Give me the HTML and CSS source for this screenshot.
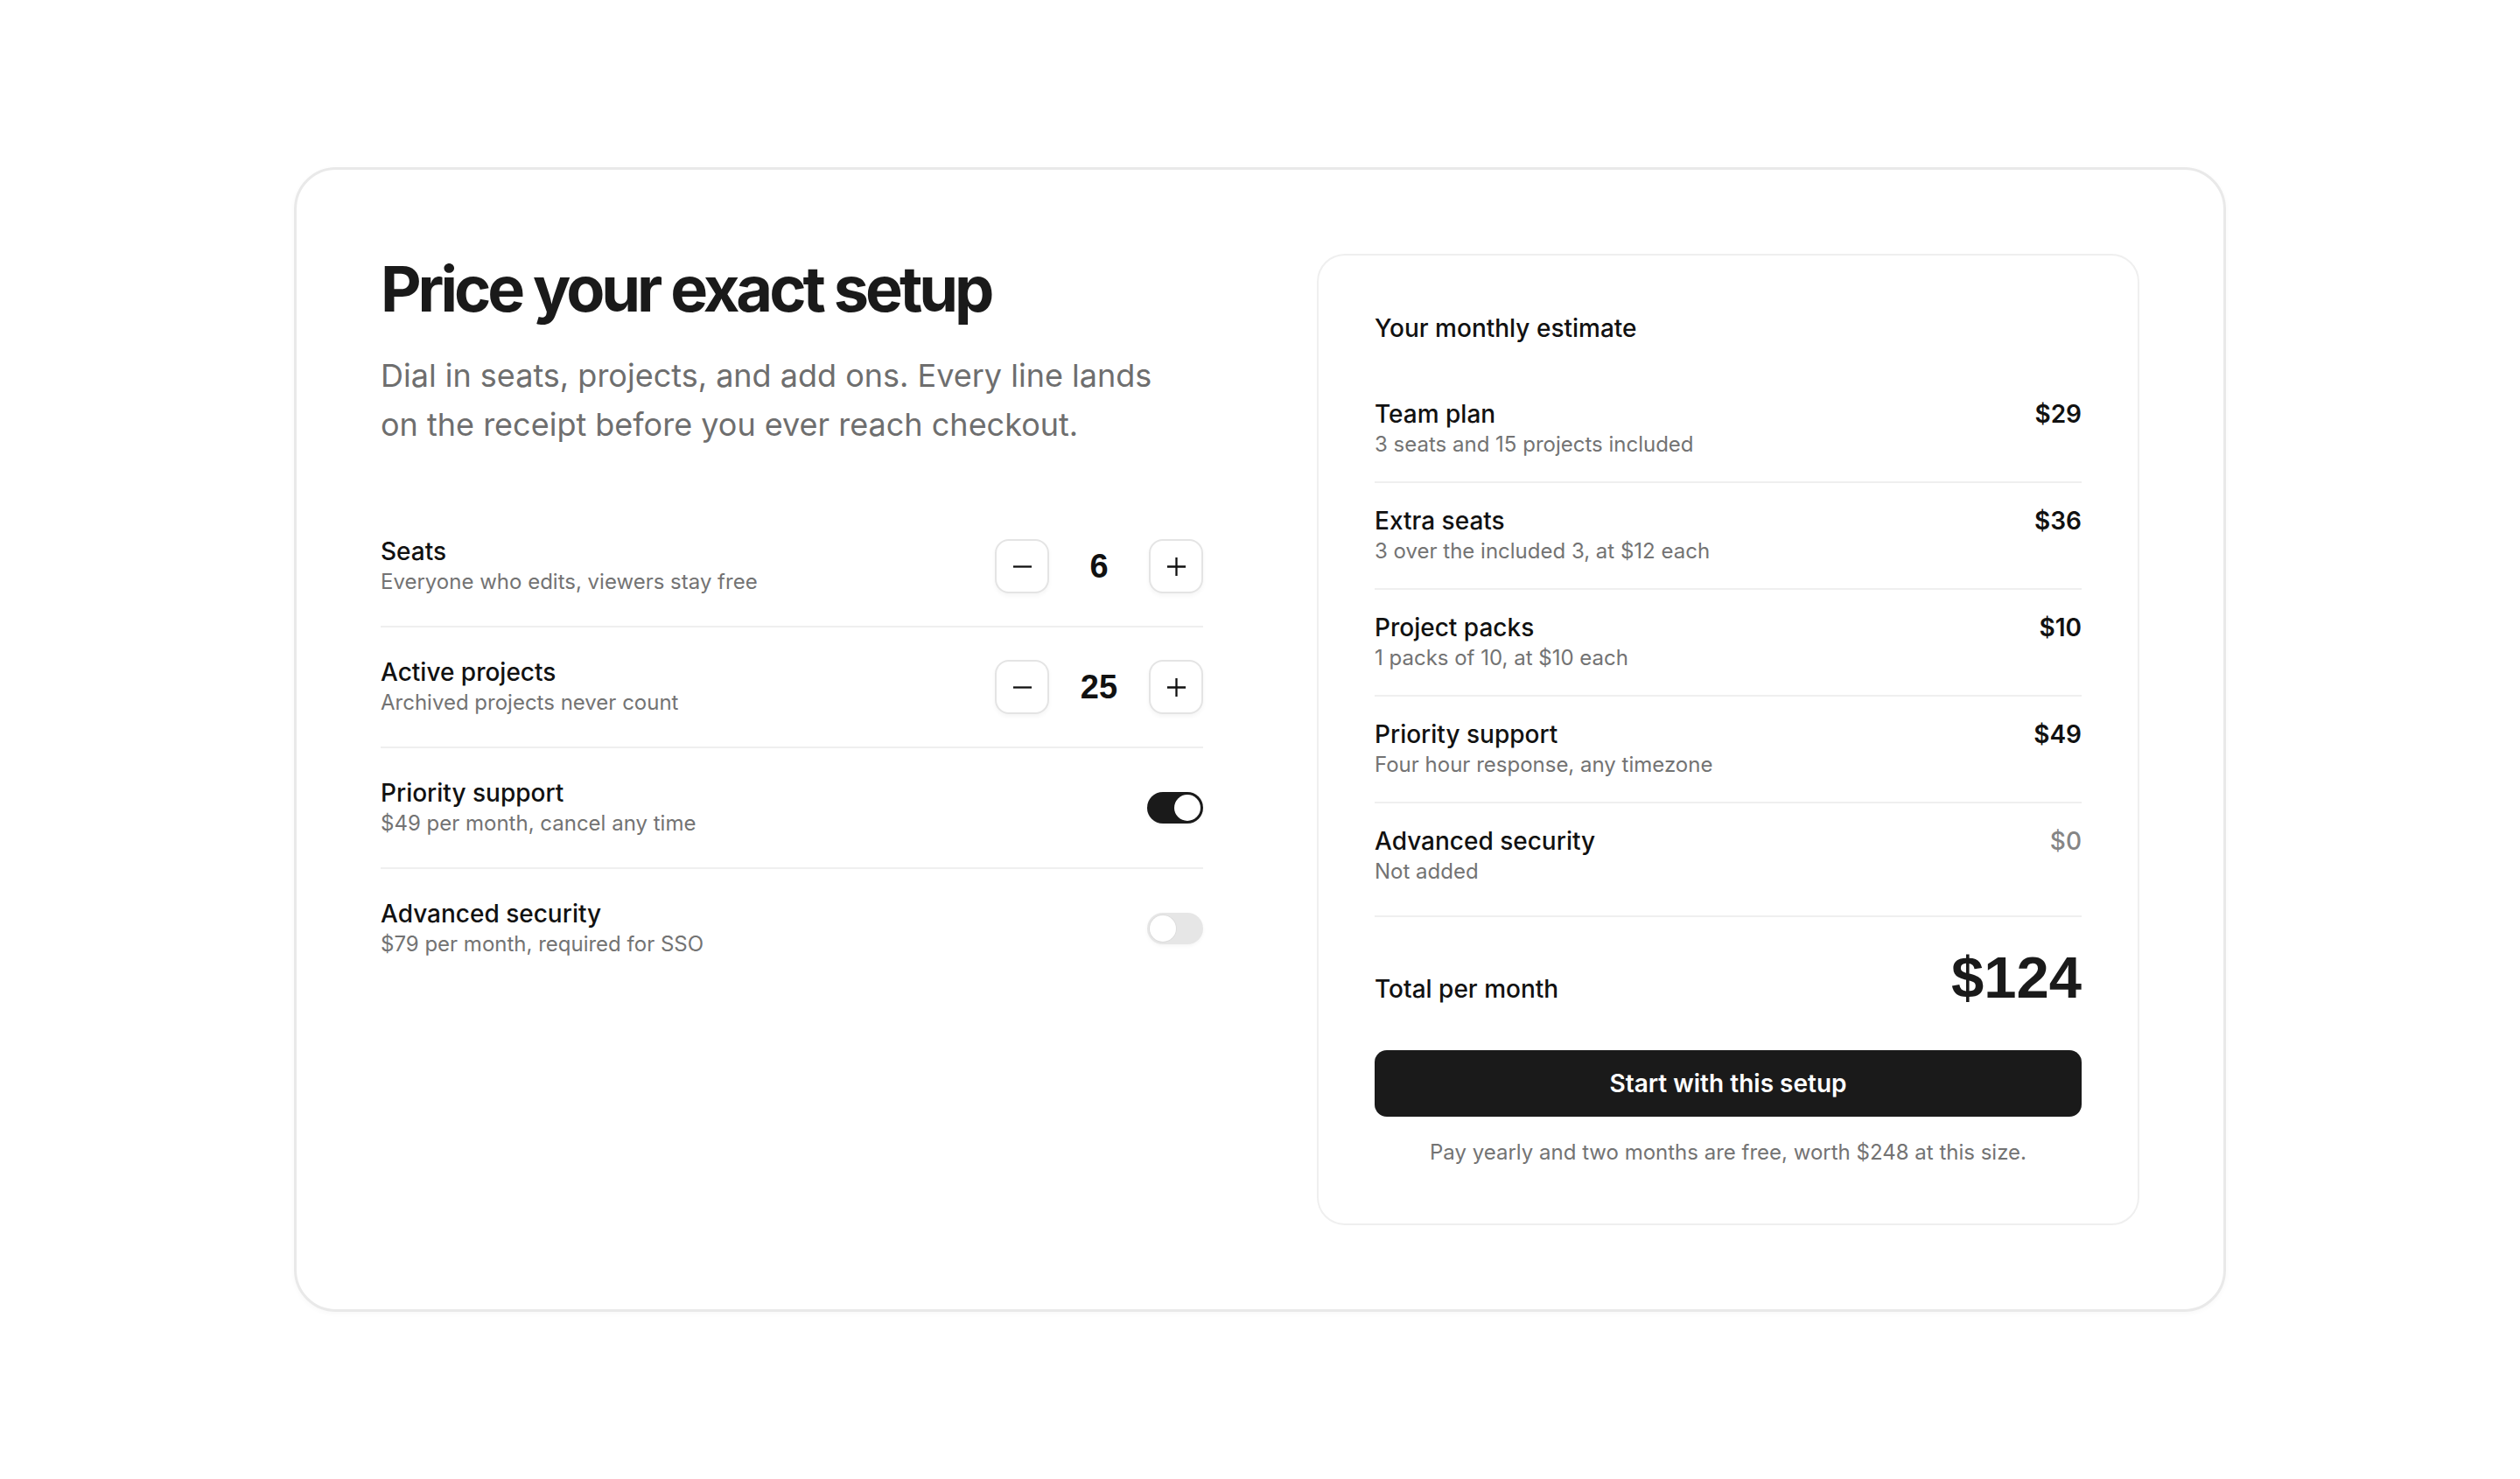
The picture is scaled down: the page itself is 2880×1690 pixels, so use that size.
FILE: index.html
```html
<!DOCTYPE html>
<html lang="en">
<head>
<meta charset="utf-8">
<title>Price your exact setup</title>
<link rel="stylesheet" href="styles.css">
</head>
<body>
<main class="card">
  <section class="config">
    <h1 class="title">Price your exact setup</h1>
    <p class="lede">Dial in seats, projects, and add ons. Every line lands on the receipt before you ever reach checkout.</p>
    <ul class="options">
      <li class="option">
        <div class="option-text">
          <span class="option-label">Seats</span>
          <span class="option-desc">Everyone who edits, viewers stay free</span>
        </div>
        <div class="stepper">
          <button class="step-btn" aria-label="Remove seat"><svg viewBox="0 0 24 24" class="step-icon"><path d="M1 12h22"/></svg></button>
          <span class="step-value">6</span>
          <button class="step-btn" aria-label="Add seat"><svg viewBox="0 0 24 24" class="step-icon"><path d="M1 12h22M12 1v22"/></svg></button>
        </div>
      </li>
      <li class="option">
        <div class="option-text">
          <span class="option-label">Active projects</span>
          <span class="option-desc">Archived projects never count</span>
        </div>
        <div class="stepper">
          <button class="step-btn" aria-label="Remove project"><svg viewBox="0 0 24 24" class="step-icon"><path d="M1 12h22"/></svg></button>
          <span class="step-value">25</span>
          <button class="step-btn" aria-label="Add project"><svg viewBox="0 0 24 24" class="step-icon"><path d="M1 12h22M12 1v22"/></svg></button>
        </div>
      </li>
      <li class="option">
        <div class="option-text">
          <span class="option-label">Priority support</span>
          <span class="option-desc">$49 per month, cancel any time</span>
        </div>
        <span class="toggle toggle-on" role="switch" aria-checked="true"><span class="knob"></span></span>
      </li>
      <li class="option">
        <div class="option-text">
          <span class="option-label">Advanced security</span>
          <span class="option-desc">$79 per month, required for SSO</span>
        </div>
        <span class="toggle" role="switch" aria-checked="false"><span class="knob"></span></span>
      </li>
    </ul>
  </section>

  <aside class="receipt">
    <h2 class="receipt-title">Your monthly estimate</h2>
    <ul class="lines">
      <li class="line">
        <div class="line-text">
          <span class="line-label">Team plan</span>
          <span class="line-desc">3 seats and 15 projects included</span>
        </div>
        <span class="line-amount">$29</span>
      </li>
      <li class="line">
        <div class="line-text">
          <span class="line-label">Extra seats</span>
          <span class="line-desc">3 over the included 3, at $12 each</span>
        </div>
        <span class="line-amount">$36</span>
      </li>
      <li class="line">
        <div class="line-text">
          <span class="line-label">Project packs</span>
          <span class="line-desc">1 packs of 10, at $10 each</span>
        </div>
        <span class="line-amount">$10</span>
      </li>
      <li class="line">
        <div class="line-text">
          <span class="line-label">Priority support</span>
          <span class="line-desc">Four hour response, any timezone</span>
        </div>
        <span class="line-amount">$49</span>
      </li>
      <li class="line">
        <div class="line-text">
          <span class="line-label">Advanced security</span>
          <span class="line-desc">Not added</span>
        </div>
        <span class="line-amount line-amount-muted">$0</span>
      </li>
    </ul>
    <div class="total">
      <span class="total-label">Total per month</span>
      <span class="total-amount">$124</span>
    </div>
    <button class="cta">Start with this setup</button>
    <p class="note">Pay yearly and two months are free, worth $248 at this size.</p>
  </aside>
</main>
</body>
</html>
```

FILE: styles.css
```css
* {
  box-sizing: border-box;
}

html, body {
  margin: 0;
  padding: 0;
}

body {
  min-height: 100vh;
  display: flex;
  align-items: center;
  justify-content: center;
  background: #ffffff;
  font-family: Inter, "Noto Sans", "Liberation Sans", sans-serif;
  color: #111111;
}

.card {
  width: 2208px;
  display: grid;
  grid-template-columns: 1fr 1fr;
  column-gap: 130px;
  align-items: start;
  padding: 96px;
  border: 3px solid #e9e9e9;
  border-radius: 48px;
  background: #ffffff;
  box-shadow: 0 2px 6px rgba(0, 0, 0, 0.03);
}

/* Left column */
.config {
  display: flex;
  flex-direction: column;
}

.title {
  margin: 0;
  font-size: 72px;
  line-height: 79px;
  font-weight: 700;
  letter-spacing: -0.056em;
  color: #1a1a1a;
}

.lede {
  margin: 32px 0 0;
  max-width: 900px;
  font-size: 36px;
  line-height: 56px;
  font-weight: 400;
  color: #6e6e6e;
}

.options {
  list-style: none;
  margin: 66px 0 0;
  padding: 0;
}

.option {
  display: flex;
  align-items: center;
  justify-content: space-between;
  padding: 33px 0;
  border-bottom: 2px solid #efefef;
}

.option:last-child {
  border-bottom: none;
}

.option-text {
  display: flex;
  flex-direction: column;
}

.option-label {
  font-size: 28px;
  line-height: 36px;
  font-weight: 500;
  color: #111111;
}

.option-desc {
  font-size: 24px;
  line-height: 34px;
  color: #737373;
}

.stepper {
  display: flex;
  align-items: center;
  gap: 14px;
}

.step-btn {
  width: 62px;
  height: 62px;
  padding: 0;
  display: flex;
  align-items: center;
  justify-content: center;
  background: #ffffff;
  border: 2px solid #e4e4e4;
  border-radius: 16px;
  box-shadow: 0 3px 5px rgba(0, 0, 0, 0.04);
  cursor: pointer;
}

.step-icon {
  width: 23px;
  height: 23px;
  fill: none;
  stroke: #111111;
  stroke-width: 2.4;
}

.step-value {
  min-width: 86px;
  text-align: center;
  font-family: "Liberation Sans", Arial, sans-serif;
  font-size: 38px;
  line-height: 42px;
  font-weight: 700;
  color: #111111;
}

.toggle {
  position: relative;
  flex: none;
  width: 64px;
  height: 36px;
  border-radius: 18px;
  background: #e6e6e6;
  box-shadow: 0 2px 4px rgba(0, 0, 0, 0.04);
}

.knob {
  position: absolute;
  top: 3px;
  left: 3px;
  width: 30px;
  height: 30px;
  border-radius: 50%;
  background: #ffffff;
  box-shadow: 0 0 0 1px rgba(0, 0, 0, 0.04);
}

.toggle-on {
  background: #1a1a1a;
}

.toggle-on .knob {
  left: 31px;
}

/* Right column */
.receipt {
  display: flex;
  flex-direction: column;
  padding: 64px;
  border: 2px solid #efefef;
  border-radius: 32px;
  background: #ffffff;
}

.receipt-title {
  margin: 0 0 37px;
  padding-top: 1px;
  font-size: 28px;
  line-height: 36px;
  font-weight: 500;
  color: #111111;
}

.lines {
  list-style: none;
  margin: 0;
  padding: 0;
}

.line {
  display: flex;
  align-items: flex-start;
  justify-content: space-between;
  padding: 25px 0;
  border-bottom: 2px solid #efefef;
}

.line:last-child {
  border-bottom: none;
}

.line-text {
  display: flex;
  flex-direction: column;
}

.line-label {
  font-size: 28px;
  line-height: 36px;
  font-weight: 500;
  color: #111111;
}

.line-desc {
  font-size: 24px;
  line-height: 34px;
  color: #737373;
}

.line-amount {
  font-size: 28px;
  line-height: 36px;
  font-weight: 600;
  color: #111111;
}

.line-amount-muted {
  font-weight: 500;
  color: #858585;
}

.total {
  display: flex;
  align-items: baseline;
  justify-content: space-between;
  margin-top: 8px;
  padding-top: 36px;
  border-top: 2px solid #efefef;
}

.total-label {
  font-size: 28px;
  line-height: 36px;
  font-weight: 500;
  color: #111111;
}

.total-amount {
  font-family: "Liberation Sans", Arial, sans-serif;
  font-size: 67px;
  line-height: 66px;
  font-weight: 700;
  color: #1a1a1a;
}

.cta {
  margin-top: 50px;
  height: 76px;
  width: 100%;
  border: none;
  border-radius: 14px;
  background: #1a1a1a;
  color: #ffffff;
  font-family: Inter, "Noto Sans", "Liberation Sans", sans-serif;
  font-size: 28px;
  font-weight: 600;
  cursor: pointer;
}

.note {
  margin: 24px 0 0;
  text-align: center;
  font-size: 24px;
  line-height: 34px;
  color: #737373;
}
```
